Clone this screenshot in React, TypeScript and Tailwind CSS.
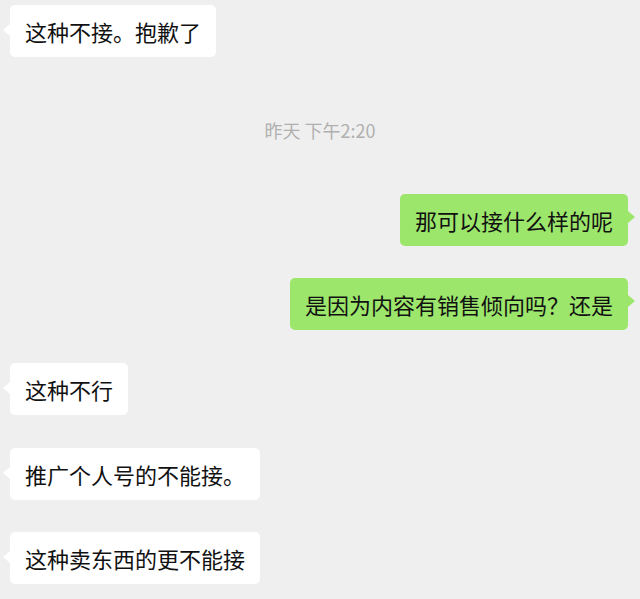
import React from "react";

type Msg =
  | { kind: "time"; text: string; mt: string }
  | { kind: "in" | "out"; text: string; mt: string };

const messages: Msg[] = [
  { kind: "in", text: "这种不接。抱歉了", mt: "mt-0" },
  { kind: "time", text: "昨天 下午2:20", mt: "mt-[61px]" },
  { kind: "out", text: "那可以接什么样的呢", mt: "mt-[52px]" },
  { kind: "out", text: "是因为内容有销售倾向吗？还是", mt: "mt-[32px]" },
  { kind: "in", text: "这种不行", mt: "mt-[33px]" },
  { kind: "in", text: "推广个人号的不能接。", mt: "mt-[33px]" },
  { kind: "in", text: "这种卖东西的更不能接", mt: "mt-[32px]" },
];

const Bubble: React.FC<{ text: string; out: boolean }> = ({ text, out }) => (
  <div
    className={`relative flex h-[52px] items-center rounded-[5px] px-[15px] text-[22px] leading-none text-[#111] ${
      out ? "bg-[#9de66c]" : "bg-white"
    }`}
  >
    {out ? (
      <span className="absolute right-[-7px] top-[17px] h-0 w-0 border-y-[6px] border-l-[7px] border-y-transparent border-l-[#9de66c]" />
    ) : (
      <span className="absolute left-[-7px] top-[19px] h-0 w-0 border-y-[6px] border-r-[7px] border-y-transparent border-r-white" />
    )}
    {text}
  </div>
);

export default function App() {
  return (
    <div
      className="flex h-[599px] w-[640px] flex-col overflow-hidden bg-[#efefef] pl-[10px] pr-[12px] pt-[5px]"
      style={{ fontFamily: '"Noto Sans CJK SC", "Noto Sans", sans-serif' }}
    >
      {messages.map((m, i) =>
        m.kind === "time" ? (
          <div
            key={i}
            className={`${m.mt} flex h-[24px] items-center justify-center pl-[2px] text-[18px] text-[#b0b0b0]`}
          >
            {m.text}
          </div>
        ) : (
          <div
            key={i}
            className={`${m.mt} flex ${m.kind === "out" ? "justify-end" : "justify-start"}`}
          >
            <Bubble text={m.text} out={m.kind === "out"} />
          </div>
        )
      )}
    </div>
  );
}
